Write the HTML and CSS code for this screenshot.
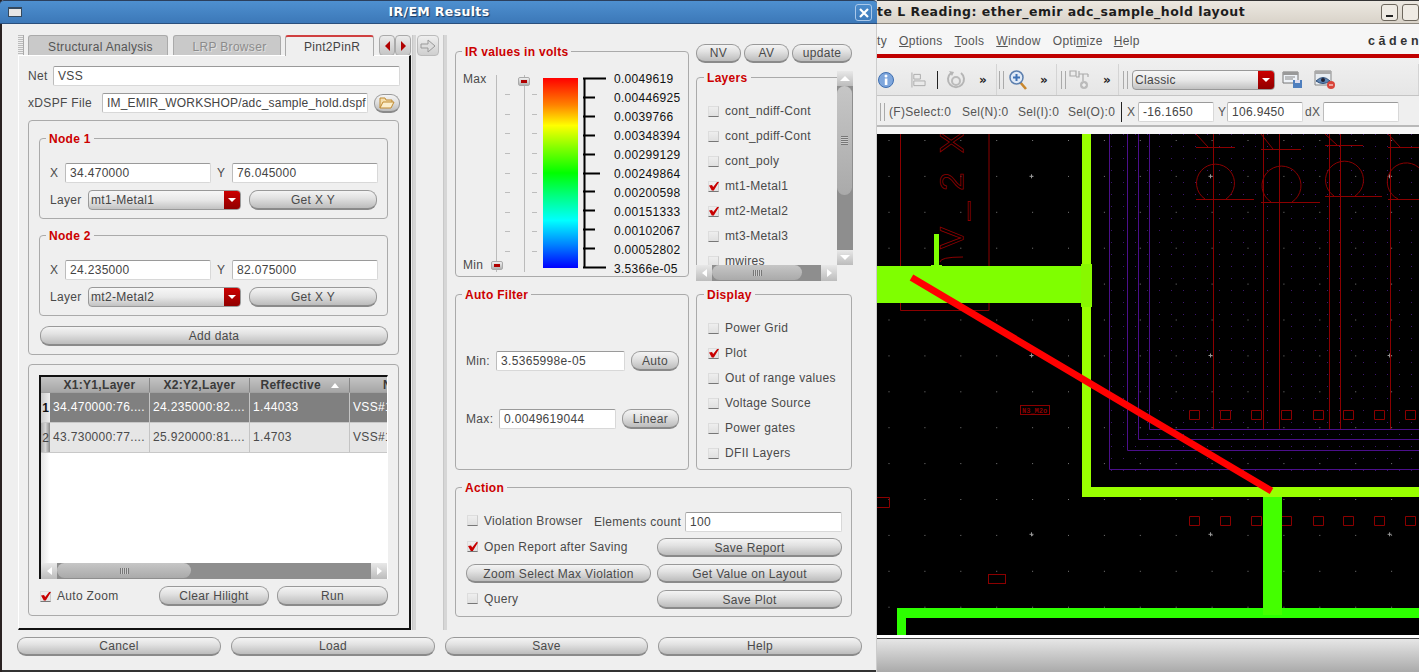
FILE: index.html
```html
<!DOCTYPE html>
<html lang="en">
<head>
<meta charset="utf-8">
<title>IR/EM Results</title>
<link rel="stylesheet" href="styles.css">
</head>
<body>
<section class="layout-win">
  <div class="lw-title"><span class="lw-title-text">te L Reading: ether_emir adc_sample_hold layout</span><span class="wm-btn wm-min"></span><span class="wm-btn"></span></div>
  <div class="lw-menu">
    <span class="mi mi-first">ty</span><span class="mi"><u>O</u>ptions</span><span class="mi"><u>T</u>ools</span><span class="mi"><u>W</u>indow</span><span class="mi">Opti<u>m</u>ize</span><span class="mi"><u>H</u>elp</span>
    <span class="logo">cāden</span>
  </div>
  <div class="lw-redline"></div>
  <div class="lw-tools">
    <div class="seg seg-a">
      <svg class="ic ic-info" viewBox="0 0 16 16"><circle cx="8" cy="8" r="7.5" fill="#7ea6dc" stroke="#3f6fb0"/><rect x="6.800" y="6.500" width="2.600" height="6.500" fill="#fff"/><circle cx="8" cy="4" r="1.500" fill="#fff"/></svg>
      <svg class="ic ic-align" viewBox="0 0 16 16"><path d="M1 0v16M3 2h7v5H3zM3 9h12v5H3z" fill="none" stroke="#aaa"/></svg>
      <span class="vsep"></span>
      <svg class="ic ic-undo" viewBox="0 0 20 20"><path d="M5 3a8 8 0 1 0 10 0" fill="none" stroke="#b5b5b5" stroke-width="2"/><path d="M3 1l5 1-2 4z" fill="#b5b5b5"/><circle cx="10" cy="11" r="4" fill="none" stroke="#bbb" stroke-width="2"/></svg>
      <span class="more">»</span>
    </div>
    <div class="seg seg-b">
      <span class="grip"></span>
      <svg class="ic ic-zoom" viewBox="0 0 18 20"><path d="M11 12l6 7" stroke="#c9872c" stroke-width="2.600"/><circle cx="7.500" cy="7.500" r="6.500" fill="#dfe9f6" stroke="#5c7fae" stroke-width="1.500"/><path d="M7.500 4v7M4 7.500h7" stroke="#3f72b5" stroke-width="2"/></svg>
      <span class="more">»</span>
    </div>
    <div class="seg seg-c">
      <span class="grip"></span>
      <svg class="ic ic-hier" viewBox="0 0 21 20"><path d="M1 1h6v5H1zM10 1v6H7M10 4h9M14 4v7M19 4v3" fill="none" stroke="#aaa" stroke-width="1.200"/><circle cx="15" cy="15" r="4" fill="#bbb"/><path d="M15 13v4M13 15h4" stroke="#fff"/></svg>
      <span class="more">»</span>
    </div>
    <div class="seg seg-d">
      <span class="grip"></span>
      <div class="combo combo-classic"><span class="combo-text">Classic</span><span class="combo-arrow"></span></div>
      <svg class="ic ic-save" viewBox="0 0 21 18"><path d="M1 1h15v11H1z" fill="#eef2f7" stroke="#777"/><path d="M1 1h15v3H1z" fill="#999"/><path d="M3 6h10M3 8h8" stroke="#888"/><path d="M11 9h9v8h-9z" fill="#4f7fbe"/><path d="M13 9h5v3h-5z" fill="#dde"/></svg>
      <svg class="ic ic-eye" viewBox="0 0 22 20"><path d="M1 1h16v14H1z" fill="#e8edf2" stroke="#888"/><path d="M1 1h16v3H1z" fill="#aaa"/><path d="M2 11q7-7 14 0q-7 5-14 0z" fill="#5f86b5" stroke="#2f4f78"/><circle cx="9" cy="10" r="2" fill="#223"/><circle cx="17" cy="15" r="4" fill="#d9453a"/><path d="M15 15h4" stroke="#fff"/></svg>
    </div>
  </div>
  <div class="lw-status">
    <span class="grip"></span>
    <span class="st st-f">(F)Select:0</span><span class="st st-n">Sel(N):0</span><span class="st st-i">Sel(I):0</span><span class="st st-o">Sel(O):0</span>
    <span class="vsep vsep-st"></span>
    <span class="st st-x">X</span><span class="input st-in">-16.1650</span>
    <span class="st st-y">Y</span><span class="input st-in">106.9450</span>
    <span class="st st-dx">dX</span><span class="input st-in"></span>
  </div>
  <div class="lw-gap"></div>
  <svg class="canvas" viewBox="877 134 542 501" width="542" height="501">
    <defs>
      <pattern id="grid" x="888.500" y="140" width="35.900" height="35.900" patternUnits="userSpaceOnUse"><rect width="1" height="1" fill="#7a7a7a"/></pattern>
      <pattern id="pdots" x="1111" y="134" width="12" height="12" patternUnits="userSpaceOnUse"><rect width="1" height="1" fill="#3c1670"/></pattern>
    </defs>
    <rect x="877" y="134" width="542" height="501" fill="#000"/>
    <rect x="877" y="134" width="542" height="501" fill="url(#grid)"/>
    <rect x="1111" y="134" width="308" height="340" fill="url(#pdots)"/>
    <path d="M1031.500 174.300v4M1029.500 176.300h4M1210.500 174.300v4M1208.500 176.300h4M1389.600 174.300v4M1387.600 176.300h4M1031.500 353.500v4M1029.500 355.500h4M1210.500 353.500v4M1208.500 355.500h4M1389.600 353.500v4M1387.600 355.500h4M1031.500 532.300v4M1029.500 534.300h4M1210.500 532.300v4M1208.500 534.300h4M1389.600 532.300v4M1387.600 534.300h4" stroke="#999" stroke-width="1"/>
    <g fill="none" stroke="#8b0000" stroke-width="1">
      <path d="M900.500 134V310.500H989V134"/>
      <path d="M940 262q0-5 23-5"/>
      <path d="M1213.500 134V429.500M1263.500 134V429.500M1279.500 134V429.500M1329.500 134V429.500M1340.500 134V429.500M1390.500 134V429.500"/>
      <path d="M1196 147.500h39M1261 149.500h40M1325 145.500h38M1388 147.500h31"/>
      <path d="M1196 199.500h58M1261 202.500h59M1325 196.500h57M1388 199.500h31"/>
      <path d="M1205 199a19 19 0 1 1 21 0M1271 202a19.500 19.500 0 1 1 21 0M1334 196a19 19 0 1 1 21 0M1398 199a19 19 0 1 1 21-3"/>
      <path d="M1196 134l12 13M1261 134l12 15M1325 134l12 11M1388 134l12 13"/>
      <path d="M1189.500 410.500h10v9h-10zM1220.500 410.500h10v9h-10zM1251.500 410.500h10v9h-10zM1281.500 410.500h10v9h-10zM1313.500 410.500h10v9h-10zM1343.500 410.500h10v9h-10zM1374.500 410.500h10v9h-10zM1405.500 410.500h10v9h-10z"/>
      <path d="M1189.500 516.500h10v9h-10zM1220.500 516.500h10v9h-10zM1251.500 516.500h10v9h-10zM1281.500 516.500h10v9h-10zM1313.500 516.500h10v9h-10zM1343.500 516.500h10v9h-10zM1374.500 516.500h10v9h-10zM1405.500 516.500h10v9h-10z"/>
      <rect x="1020.500" y="405.500" width="29" height="9"/>
      <rect x="988.500" y="574.500" width="17" height="9"/>
      <path d="M877 497.500h12.500v10H877"/>
    </g>
    <text class="stick" transform="translate(963 249) rotate(-90)" dx="0 0 4 12">V_2X</text>
    <text class="tiny" x="1022" y="413">N3_M2o</text>
    <g fill="none" stroke="#4b0f8a" stroke-width="1">
      <path d="M1109.500 134V469.500H1419M1127.500 134V450.500H1419M1138.500 134V439.500H1419M1149.500 134V429.500H1419"/>
    </g>
    <path d="M1082 134h9v353h328v10H1082z" fill="#99ff00"/>
    <rect x="877" y="266" width="205" height="37" fill="#7fff00"/>
    <rect x="934" y="234" width="5" height="32" fill="#7fff00"/>
    <rect x="931" y="265" width="11" height="2" fill="#7fff00"/>
    <rect x="1081" y="264" width="11" height="43" fill="#88f800"/>
    <rect x="897" y="608" width="522" height="10" fill="#2dff00"/>
    <rect x="897" y="608" width="9" height="27" fill="#2dff00"/>
    <rect x="1263" y="497" width="19" height="118" fill="#44ff00"/>
    <line x1="911.500" y1="277.500" x2="1271.500" y2="491" stroke="#ff0000" stroke-width="7"/>
  </svg>
  <div class="lw-foot"></div>
</section>

<section class="dialog">
  <header class="dlg-title">
    <span class="dlg-icon"></span>
    <span class="dlg-title-text">IR/EM Results</span>
    <span class="dlg-close"><svg viewBox="0 0 10 10" width="10" height="10"><path d="M1 1l8 8M9 1l-8 8" stroke="#fff" stroke-width="2.200"/></svg></span>
  </header>
  <div class="main">
    <div class="left">
      <div class="tabs">
        <span class="tab-grip"></span>
        <span class="tab tab-1">Structural Analysis</span>
        <span class="tab tab-2">LRP Browser</span>
        <span class="tab tab-3">Pint2PinR</span>
        <span class="tab-nav"><i class="arr-l"></i></span><span class="tab-nav"><i class="arr-r"></i></span>
      </div>
      <div class="pane">
        <div class="row-net"><span class="lbl lbl-net">Net</span><span class="input in-net">VSS</span></div>
        <div class="row-file"><span class="lbl lbl-file">xDSPF File</span><span class="input in-file">IM_EMIR_WORKSHOP/adc_sample_hold.dspf</span>
          <span class="btn btn-folder"><svg viewBox="0 0 16 13" width="16" height="13"><path d="M1 12V2h5l1 2h6v2" fill="#f5dfae" stroke="#c08a30"/><path d="M1 12l3-6h11l-3 6z" fill="#fbeecb" stroke="#c08a30"/></svg></span></div>
        <div class="group group-nodes">
          <fieldset class="fs node">
            <legend>Node 1</legend>
            <div class="xy"><span class="lbl lbl-x">X</span><span class="input in-xy">34.470000</span><span class="lbl lbl-y">Y</span><span class="input in-xy">76.045000</span></div>
            <div class="lay"><span class="lbl lbl-layer">Layer</span><div class="combo combo-layer"><span class="combo-text">mt1-Metal1</span><span class="combo-arrow"></span></div><span class="btn btn-getxy">Get X Y</span></div>
          </fieldset>
          <fieldset class="fs node node-2">
            <legend>Node 2</legend>
            <div class="xy"><span class="lbl lbl-x">X</span><span class="input in-xy">24.235000</span><span class="lbl lbl-y">Y</span><span class="input in-xy">82.075000</span></div>
            <div class="lay"><span class="lbl lbl-layer">Layer</span><div class="combo combo-layer"><span class="combo-text">mt2-Metal2</span><span class="combo-arrow"></span></div><span class="btn btn-getxy">Get X Y</span></div>
          </fieldset>
          <span class="btn btn-add">Add data</span>
        </div>
        <div class="group group-table">
          <div class="table">
            <div class="t-inner">
              <div class="t-row t-head"><span class="t-corner"></span><span class="th">X1:Y1,Layer</span><span class="th">X2:Y2,Layer</span><span class="th">Reffective <i class="sort"></i></span><span class="th th-n">N</span></div>
              <div class="t-row t-sel"><span class="t-num t-num-sel">1</span><span class="td">34.470000:76....</span><span class="td">24.235000:82....</span><span class="td">1.44033</span><span class="td">VSS#1</span></div>
              <div class="t-row t-alt"><span class="t-num">2</span><span class="td">43.730000:77....</span><span class="td">25.920000:81....</span><span class="td">1.4703</span><span class="td">VSS#1</span></div>
              <div class="t-empty"></div>
            </div>
            <div class="hbar hbar-table"><span class="sb-btn"><i class="sa-l"></i></span><span class="thumb thumb-table"><i class="gripper"></i></span><span class="sb-btn sb-end"><i class="sa-r"></i></span></div>
          </div>
          <div class="row-run"><label class="chk-row"><span class="check on"></span><span class="lbl">Auto Zoom</span></label><span class="btn btn-clear">Clear Hilight</span><span class="btn btn-run">Run</span></div>
        </div>
      </div>
    </div>
    <div class="split split-1"></div>
    <div class="mid"><span class="arrow-btn"><svg viewBox="0 0 16 16" width="16" height="16"><path d="M1 6h7V2l7 6-7 6v-4H1z" fill="#ddd" stroke="#999"/></svg></span></div>
    <div class="split split-2"></div>
    <div class="right">
      <fieldset class="fs ir">
        <legend>IR values in volts</legend>
        <div class="ir-body">
          <div class="ir-names"><span class="lbl">Max</span><span class="lbl">Min</span></div>
          <div class="sliders">
            <span class="s-line s-line-a"></span><span class="s-line s-line-b"></span>
            <div class="ticks t-left"><i></i><i></i><i></i><i></i><i></i><i></i><i></i><i></i><i></i></div>
            <div class="ticks t-right"><i></i><i></i><i></i><i></i><i></i><i></i><i></i><i></i><i></i></div>
            <span class="handle h-min"></span><span class="handle h-max"></span>
          </div>
          <div class="ramp"></div>
          <svg class="bracket" viewBox="0 0 23 192" width="23" height="192"><path d="M1.500 1v190M0 1.500h23M0 20.500h12M0 39.500h12M0 58.500h12M0 77.500h12M0 96.500h17M0 114.500h12M0 133.500h12M0 152.500h12M0 171.500h12M0 190.500h23" fill="none" stroke="#000" stroke-width="2"/></svg>
          <div class="scale"><span>0.0049619</span><span>0.00446925</span><span>0.0039766</span><span>0.00348394</span><span>0.00299129</span><span>0.00249864</span><span>0.00200598</span><span>0.00151333</span><span>0.00102067</span><span>0.00052802</span><span>3.5366e-05</span></div>
        </div>
      </fieldset>
      <div class="side">
        <div class="top-btns"><span class="btn btn-nv">NV</span><span class="btn btn-nv">AV</span><span class="btn btn-up">update</span></div>
        <div class="layers">
          <div class="layers-view">
            <fieldset class="fs fs-layers">
              <legend>Layers</legend>
              <label class="chk-row"><span class="check"></span><span class="lbl">cont_ndiff-Cont</span></label>
              <label class="chk-row"><span class="check"></span><span class="lbl">cont_pdiff-Cont</span></label>
              <label class="chk-row"><span class="check"></span><span class="lbl">cont_poly</span></label>
              <label class="chk-row"><span class="check on"></span><span class="lbl">mt1-Metal1</span></label>
              <label class="chk-row"><span class="check on"></span><span class="lbl">mt2-Metal2</span></label>
              <label class="chk-row"><span class="check"></span><span class="lbl">mt3-Metal3</span></label>
              <label class="chk-row"><span class="check"></span><span class="lbl">mwires</span></label>
            </fieldset>
          </div>
          <div class="vbar"><span class="sb-btn sb-v"><i class="sa-u"></i></span><span class="thumb thumb-v"><i class="gripper gripper-v"></i></span><span class="sb-btn sb-v sb-vend"><i class="sa-d"></i></span></div>
          <div class="hbar hbar-layers"><span class="sb-btn"><i class="sa-l"></i></span><span class="thumb thumb-layers"><i class="gripper"></i></span><span class="sb-btn sb-end"><i class="sa-r"></i></span></div>
        </div>
      </div>
      <fieldset class="fs filter">
        <legend>Auto Filter</legend>
        <div class="f-row"><span class="lbl lbl-min">Min:</span><span class="input in-min">3.5365998e-05</span><span class="btn btn-auto">Auto</span></div>
        <div class="f-row"><span class="lbl lbl-max">Max:</span><span class="input in-max">0.0049619044</span><span class="btn btn-linear">Linear</span></div>
      </fieldset>
      <fieldset class="fs display">
        <legend>Display</legend>
        <label class="chk-row"><span class="check"></span><span class="lbl">Power Grid</span></label>
        <label class="chk-row"><span class="check on"></span><span class="lbl">Plot</span></label>
        <label class="chk-row"><span class="check"></span><span class="lbl">Out of range values</span></label>
        <label class="chk-row"><span class="check"></span><span class="lbl">Voltage Source</span></label>
        <label class="chk-row"><span class="check"></span><span class="lbl">Power gates</span></label>
        <label class="chk-row"><span class="check"></span><span class="lbl">DFII Layers</span></label>
      </fieldset>
      <fieldset class="fs action">
        <legend>Action</legend>
        <div class="a-grid">
          <div class="a-first"><label class="chk-row"><span class="check"></span><span class="lbl">Violation Browser</span></label><span class="lbl lbl-count">Elements count</span><span class="input in-count">100</span></div>
          <label class="chk-row"><span class="check on"></span><span class="lbl">Open Report after Saving</span></label><span class="btn">Save Report</span>
          <span class="btn">Zoom Select Max Violation</span><span class="btn">Get Value on Layout</span>
          <label class="chk-row"><span class="check"></span><span class="lbl">Query</span></label><span class="btn">Save Plot</span>
        </div>
      </fieldset>
    </div>
  </div>
  <footer class="foot"><span class="btn btn-foot">Cancel</span><span class="btn btn-foot">Load</span><span class="btn btn-foot">Save</span><span class="btn btn-foot">Help</span></footer>
</section>
</body>
</html>
```

FILE: styles.css
```css
* { box-sizing: border-box; }
html, body { margin: 0; padding: 0; }
body {
  width: 1419px; height: 672px; overflow: hidden; position: relative;
  background: #d8d8d8;
  font: 12px/14px "Liberation Sans", Arial, sans-serif;
  letter-spacing: .32px; color: #4a4a4a;
}
i { display: block; font-style: normal; }

/* ---------- back window ---------- */
.layout-win {
  position: absolute; left: 877px; top: 0; width: 542px; height: 672px;
  overflow: hidden; display: flex; flex-direction: column; background: #efefef;
}
.lw-title {
  height: 24px; flex: none; display: flex; align-items: center;
  background: linear-gradient(#ece8e1, #d9d3c9); border-bottom: 1px solid #8d887f; border-top: 1px solid #333;
}
.lw-title-text { font: bold 12.5px/16px "DejaVu Sans", sans-serif; letter-spacing: .48px; color: #1d1d1d; white-space: nowrap; width: 517px; }
.wm-btn { width: 17px; height: 17px; flex: none; border: 1px solid #6d675d; border-radius: 3px; background: #efebe4; position: relative; }
.wm-min { margin-right: 4px; }
.wm-min::after { content: ""; position: absolute; left: 4px; bottom: 3px; width: 7px; height: 2px; background: #222; }
.lw-menu { height: 30px; flex: none; display: flex; align-items: center; background: #f6f6f6; white-space: nowrap; padding-top: 3px; color: #555; }
.mi { margin-left: 12px; }
.mi-first { margin-left: 0; }
.mi:nth-child(6) { margin-left: 11px; }
.logo { margin-left: auto; margin-right: 0; width: 51px; font: bold 12.5px/16px "Liberation Sans", sans-serif; letter-spacing: 3.600px; color: #333; overflow: hidden; }
.lw-redline { height: 4px; flex: none; background: #c00000; }
.lw-tools { height: 38px; flex: none; display: flex; padding-top: 6px; background: linear-gradient(#f0f0f0, #e6e6e6); border-bottom: 1px solid #c4c4c4; }
.seg { display: flex; align-items: center; height: 100%; border-right: 1px solid #d4d4d4; }
.seg-a { width: 120px; }
.seg-b { width: 60px; padding-left: 2px; }
.seg-c { width: 62px; padding-left: 4px; }
.seg-d { flex: 1; padding-left: 4px; }
.ic { flex: none; display: block; }
.ic-info { width: 16px; height: 16px; margin-left: 1px; }
.ic-align { width: 15px; height: 16px; margin-left: 17px; }
.vsep { width: 1px; height: 18px; background: #222; flex: none; margin-left: 11px; }
.ic-undo { width: 20px; height: 20px; margin-left: 8px; }
.more { font: bold 12px/14px "DejaVu Sans", sans-serif; color: #222; margin-left: 13px; }
.grip { width: 5px; height: 18px; flex: none; border-left: 1px solid #aaa; border-right: 1px solid #aaa; position: relative; }
.ic-zoom { width: 18px; height: 20px; margin-left: 5px; }
.ic-hier { width: 21px; height: 20px; margin-left: 3px; }
.combo-classic { width: 143px; margin-left: 4px; }
.ic-save { width: 21px; height: 18px; margin-left: 7px; }
.ic-eye { width: 22px; height: 20px; margin-left: 11px; }
.lw-status { height: 31px; flex: none; display: flex; align-items: center; background: #efefef; border-bottom: 2px solid #b9b9b9; white-space: nowrap; color: #555; padding: 3px 0 0 3px; }
.st-f { margin-left: 4px; width: 73px; }
.st-n { width: 56px; }
.st-i { width: 50px; }
.st-o { width: 53px; }
.vsep-st { margin-left: 0; height: 20px; }
.st-x { margin-left: 5px; width: 11px; }
.st-in { width: 76px; height: 20px; }
.st-y { margin-left: 4px; width: 9px; }
.st-dx { margin-left: 2px; width: 18px; }
.lw-gap { height: 7px; flex: none; background: #f6f6f6; }
.canvas { display: block; flex: none; }
.stick { font: 33px "Liberation Sans", sans-serif; letter-spacing: 7px; fill: none; stroke: #8b0000; stroke-width: .8px; }
.tiny { font: bold 7px "Liberation Mono", monospace; letter-spacing: 0; fill: #8b0000; }
.lw-foot { flex: 1; border-top: 3px solid #fff; box-shadow: inset 0 1px 0 #444; background: linear-gradient(#e8e8e8, #aaa); }

/* ---------- dialog ---------- */
.dialog {
  position: absolute; left: 0; top: 0; width: 877px; height: 672px; background: #efefef;
  box-shadow: inset 2px 0 0 #2a2222, inset -1px 0 0 #ccc, inset 0 -2px 0 #333;
}
.dlg-title {
  height: 24px; display: flex; align-items: center; justify-content: center; position: relative;
  background: linear-gradient(#4e90d0, #3c78b8); border-bottom: 1px solid #2a4f7c; border-top: 1px solid #2b3f5c; border-radius: 4px 4px 0 0;
}
.dlg-title-text { font: bold 12.5px/16px "DejaVu Sans", sans-serif; letter-spacing: .35px; color: #fff; text-shadow: 1px 1px 1px #1c3a60; margin-left: 1px; }
.dlg-icon { position: absolute; left: 8px; top: 6px; width: 14px; height: 10px; background: #e6e6e6; border: 1px solid #34495e; border-top-width: 2px; }
.dlg-close { position: absolute; right: 5px; top: 3px; width: 17px; height: 17px; border: 1px solid #a9c8ea; border-radius: 3px; display: flex; align-items: center; justify-content: center; }
.main { display: flex; height: 595px; margin-top: 11px; padding-left: 18px; }
.left { width: 393px; flex: none; display: flex; flex-direction: column; }

.tabs { height: 20px; display: flex; align-items: flex-start; flex: none; }
.tab-grip { width: 6px; height: 20px; background: repeating-linear-gradient(#bbb 0 1px, #eee 1px 2px); border-right: 1px solid #aaa; flex: none; margin-right: 4px; }
.tab { height: 20px; display: flex; align-items: center; justify-content: center; flex: none; white-space: nowrap; background: #c9c9c9; border: 1px solid #aaa; border-bottom: 0; border-radius: 3px 3px 0 0; color: #555; padding: 2px 0 0 5px; }
.tab-1 { width: 140px; margin-right: 5px; }
.tab-2 { width: 108px; margin-right: 4px; color: #8c8c8c; text-shadow: 1px 1px 0 #e0e0e0; }
.tab-3 { width: 89px; margin-right: 5px; background: #efefef; border-top: 2px solid #d04040; color: #444; height: 21px; position: relative; z-index: 1; padding-top: 0; }
.tab-nav { width: 16px; height: 21px; flex: none; background: linear-gradient(#ececec, #c4c4c4); border: 1px solid #aaa; border-radius: 4px; display: flex; align-items: center; justify-content: center; }
.arr-l { border: 5px solid transparent; border-right: 5px solid #b00000; border-left: 0; }
.arr-r { border: 5px solid transparent; border-left: 5px solid #b00000; border-right: 0; }

.pane { height: 575px; flex: none; border-right: 2px solid #111; border-bottom: 2px solid #111; border-top: 1px solid #fff; border-left: 1px solid #fff; padding: 10px 0 0 9px; }
.row-net, .row-file { display: flex; align-items: center; width: 372px; }
.lbl { white-space: nowrap; color: #4a4a4a; }
.lbl-net { width: 25px; flex: none; }
.in-net { width: 347px; }
.row-file { margin-top: 6px; height: 22px; }
.lbl-file { width: 74px; flex: none; }
.in-file { width: 266px; padding-left: 2px; letter-spacing: .2px; }
.btn-folder { width: 26px; height: 22px; margin-left: 6px; flex: none; border-radius: 7px; }

.input { display: block; height: 20px; flex: none; background: #fff; border: 1px solid #d8d8d8; border-top: 1px solid #9a9a9a; border-left-color: #bcbcbc; border-radius: 2px; padding: 2px 0 0 4px; white-space: nowrap; overflow: hidden; color: #444; }
.btn { display: flex; align-items: center; justify-content: center; height: 19px; flex: none; white-space: nowrap; color: #4a4a4a; background: linear-gradient(#f4f4f4, #e2e2e2 40%, #bcbcbc); border: 1px solid #999; border-bottom: 2px solid #8a8a8a; border-radius: 9px; }

.group { width: 371px; border: 1px solid #aaa; border-radius: 4px; padding: 10px 0 0 10px; margin-top: 6px; }
.group-nodes { height: 235px; }
.group-table { height: 252px; margin-top: 9px; }
.fs { margin: 0; padding: 0; min-width: 0; border: 1px solid #aaa; border-radius: 4px; }
.fs legend { padding: 0 3px; margin-left: 6px; font: bold 12px/16px "Liberation Sans", sans-serif; letter-spacing: .3px; color: #cc0000; height: 14px; }
.node legend, .filter legend, .action legend { margin-left: -4px; }
.fs-layers legend, .display legend { margin-left: -4px; }
.node { width: 349px; height: 88px; padding: 18px 10px 0; }
.node-2 { margin-top: 9px; }
.xy, .lay { display: flex; align-items: center; }
.lbl-x { width: 15px; flex: none; }
.lbl-y { width: 15px; margin-left: 6px; flex: none; }
.in-xy { width: 146px; }
.lay { margin-top: 7px; }
.lbl-layer { width: 38px; flex: none; }
.combo { display: flex; height: 20px; flex: none; border: 1px solid #999; border-radius: 4px; overflow: hidden; background: linear-gradient(#f7f7f7, #e8e8e8 50%, #c2c2c2); }
.combo-layer { width: 153px; }
.combo-text { flex: 1; padding: 2px 0 0 2px; color: #444; }
.combo-arrow { width: 16px; flex: none; background: linear-gradient(#cc0000, #900000); position: relative; }
.combo-arrow::after { content: ""; position: absolute; left: 4px; top: 7px; border: 4px solid transparent; border-top: 4px solid #fff; border-bottom: 0; }
.btn-getxy { width: 128px; margin-left: 8px; height: 20px; }
.btn-add { width: 348px; height: 20px; margin: 10px 0 0 1px; }

.table { width: 349px; height: 204px; border-top: 2px solid #111; border-left: 2px solid #111; border-right: 1px solid #fff; background: #fff; display: flex; flex-direction: column; overflow: hidden; }
.t-inner { flex: 1; overflow: hidden; display: flex; flex-direction: column; }
.t-row { display: flex; flex: none; }
.t-head { height: 16px; background: linear-gradient(#c4c4c4, #a6a6a6); padding-top: 1px; border-bottom: 1px solid #a0a0a0; }
.t-corner { width: 9px; flex: none; }
.th { width: 100px; flex: none; text-align: center; font-weight: bold; color: #3a3a3a; border-right: 1px solid #888; white-space: nowrap; }
.th-n { width: 100px; text-align: left; padding-left: 33px; border: 0; }
.sort { display: inline-block; border: 4px solid transparent; border-bottom: 5px solid #fff; border-top: 0; margin: 0 0 1px 6px; }
.t-sel, .t-alt { height: 30px; border-bottom: 1px solid #c8c8c8; }
.t-sel { background: #808080; }
.t-alt { background: #e6e6e6; }
.t-num { width: 9px; flex: none; display: flex; align-items: center; justify-content: center; background: linear-gradient(90deg, #aaa, #d5d5d5 50%, #888); color: #444; letter-spacing: 0; }
.t-num-sel { font-weight: bold; color: #111; background: linear-gradient(90deg, #ccc, #eee); }
.td { width: 100px; flex: none; padding: 7px 0 0 3px; white-space: nowrap; overflow: hidden; border-right: 1px solid #c4c4c4; color: #4a4a4a; }
.t-sel .td { color: #fff; }
.t-empty { flex: 1; width: 9px; background: linear-gradient(90deg, #e4e4e4, #fff); }
.hbar { display: flex; flex: none; height: 16px; background: #8e8e8e; }
.sb-btn { width: 16px; height: 16px; flex: none; background: linear-gradient(#e8e8e8, #bcbcbc); display: flex; align-items: center; justify-content: center; }
.sb-end { margin-left: auto; }
.thumb { display: flex; align-items: center; justify-content: center; background: linear-gradient(#c6c6c6, #aaa); border-radius: 8px; flex: none; }
.thumb-table { width: 134px; height: 15px; }
.gripper { width: 9px; height: 6px; background: repeating-linear-gradient(90deg, #777 0 1px, #ccc 1px 2px); }
.gripper-v { width: 7px; height: 9px; background: repeating-linear-gradient(#777 0 1px, #ccc 1px 2px); }
.sa-l { border: 4px solid transparent; border-right: 5px solid #fff; border-left: 0; }
.sa-r { border: 4px solid transparent; border-left: 5px solid #fff; border-right: 0; }
.sa-u { border: 5px solid transparent; border-bottom: 5px solid #fff; border-top: 0; }
.sa-d { border: 5px solid transparent; border-top: 5px solid #fff; border-bottom: 0; }
.row-run { display: flex; align-items: center; height: 20px; margin-top: 7px; }
.row-run .chk-row { width: 119px; margin-left: 1px; }
.btn-clear { width: 110px; height: 20px; }
.btn-run { width: 111px; height: 20px; margin-left: 8px; }
.chk-row { display: flex; align-items: center; height: 14px; gap: 6px; white-space: nowrap; }
.check { width: 11px; height: 11px; flex: none; position: relative; background: linear-gradient(#eee, #e0e0e0); border: 1px solid #ddd; border-bottom: 1px solid #777; border-right-color: #ccc; }
.check.on::after { content: ""; position: absolute; left: 0; top: 0; width: 10px; height: 9px; background: #c80000; clip-path: polygon(0 45%, 30% 40%, 42% 62%, 85% 0, 100% 5%, 48% 100%, 28% 100%); }

.split { width: 4px; flex: none; background: #d6d6d6; border-left: 1px solid #c8c8c8; }
.split-1 { margin-left: 1px; }
.split-2 { margin-left: 4px; }
.mid { width: 22px; margin-left: 1px; flex: none; }
.arrow-btn { display: flex; width: 22px; height: 21px; align-items: center; justify-content: center; background: linear-gradient(#efefef, #cfcfcf); border: 1px solid #bbb; border-radius: 4px; }

.right { width: 397px; margin-left: 8px; flex: none; display: grid; grid-template-columns: 234px 156px; column-gap: 7px; grid-template-rows: 237px 183px 137px; row-gap: 6px; padding-top: 9px; align-content: start; height: 595px; }
.ir { height: 233px; }
.ir-body { display: flex; padding: 14px 0 0 7px; height: 218px; }
.ir-names { width: 33px; height: 200px; flex: none; display: flex; flex-direction: column; justify-content: space-between; }
.sliders { width: 42px; height: 200px; flex: none; position: relative; }
.s-line { position: absolute; top: 3px; bottom: 0; width: 1px; background: #bbb; }
.s-line-a { left: 0; }
.s-line-b { left: 28px; }
.ticks { position: absolute; top: 22px; height: 158px; display: flex; flex-direction: column; justify-content: space-between; width: 5px; }
.ticks i { height: 1px; background: #bdbdbd; }
.t-left { left: 9px; }
.t-right { left: 36px; }
.handle { position: absolute; width: 12px; height: 9px; border-radius: 2px; background: linear-gradient(#f0f0f0, #b0b0b0); border: 1px solid #aaa; }
.handle::after { content: ""; position: absolute; left: 2px; top: 2px; width: 6px; height: 3px; background: #b00000; }
.h-min { left: -5px; top: 189px; }
.h-max { left: 22px; top: 5px; }
.ramp { width: 35px; height: 190px; flex: none; margin: 6px 0 0 5px; background: linear-gradient(#ff0000 0%, #ff8000 14%, #ffff00 25%, #80ff00 37%, #00ff00 50%, #00ff80 62%, #00ffff 75%, #0080ff 88%, #0000ff 100%); }
.bracket { flex: none; margin: 5px 0 0 5px; }
.scale { flex: none; margin: 0 0 0 8px; display: flex; flex-direction: column; row-gap: 5px; color: #111; letter-spacing: .3px; }
.scale span { display: block; height: 14px; white-space: nowrap; }

.side { display: flex; flex-direction: column; }
.top-btns { display: flex; height: 19px; }
.btn-nv { width: 45px; margin-right: 3px; }
.btn-up { width: 60px; }
.layers { margin-top: 8px; width: 157px; height: 210px; display: grid; grid-template-columns: 141px 16px; grid-template-rows: 194px 16px; }
.layers-view { overflow: hidden; position: relative; }
.fs-layers { width: 170px; height: 300px; padding: 20px 0 0 11px; margin-top: -1px; display: flex; flex-direction: column; gap: 11px; }
.vbar { display: flex; flex-direction: column; background: #8e8e8e; height: 194px; }
.sb-v { height: 15px; }
.sb-vend { margin-top: auto; }
.thumb-v { height: 109px; width: 15px; }
.hbar-layers { grid-column: 1; }
.thumb-layers { width: 90px; height: 15px; }
.filter { height: 183px; padding: 50px 0 0 10px; }
.f-row { display: flex; align-items: center; height: 20px; margin-bottom: 38px; }
.lbl-min { width: 30px; flex: none; }
.in-min { width: 129px; }
.btn-auto { width: 48px; height: 20px; margin-left: 6px; }
.lbl-max { width: 33px; flex: none; }
.in-max { width: 117px; }
.btn-linear { width: 57px; height: 20px; margin-left: 6px; }
.display { height: 183px; padding: 20px 0 0 11px; display: flex; flex-direction: column; gap: 11px; }
.action { grid-column: 1 / 3; height: 137px; margin-top: 4px; padding: 18px 0 0 10px; }
.a-grid { display: grid; grid-template-columns: 185px 185px; column-gap: 6px; grid-auto-rows: 19px; row-gap: 7px; align-items: center; }
.a-grid .btn { padding-top: 1px; }
.a-grid .chk-row { margin-bottom: 2px; }
.a-first { grid-column: 1 / 3; display: flex; align-items: center; height: 20px; }
.a-first .chk-row { width: 128px; margin-left: 1px; }
.lbl-count { width: 91px; flex: none; }
.in-count { width: 157px; }
.a-grid > .chk-row { margin-left: 1px; }

.foot { display: flex; gap: 10px; margin-top: 7px; padding-left: 17px; }
.btn-foot { width: 204px; height: 19px; }
.btn-foot:nth-child(3) { width: 203px; }
```
